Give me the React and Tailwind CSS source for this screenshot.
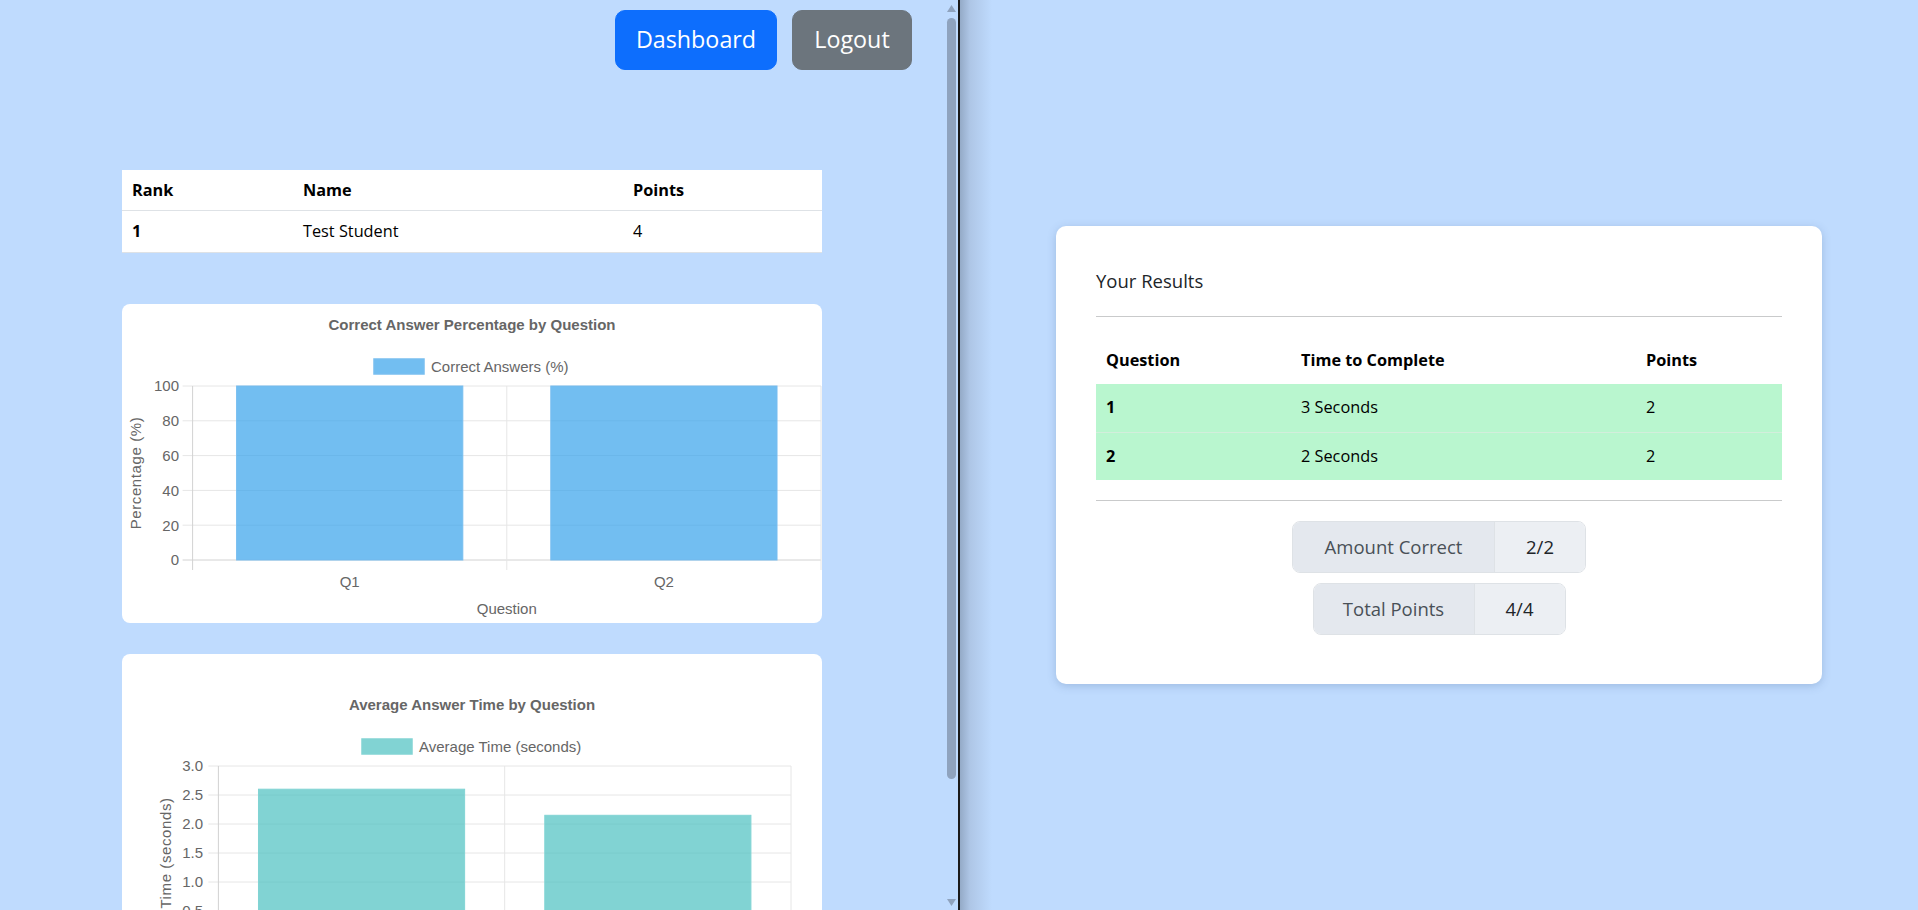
import React from 'react';

const leaderboard = [{ rank: 1, name: 'Test Student', points: 4 }];

const results = [
  { q: 1, time: '3 Seconds', points: 2 },
  { q: 2, time: '2 Seconds', points: 2 },
];

function BarChart({ width, height = 319, title, legend, fill, stroke, yTitle, ticks, max, values, labels, xTitle, plotLeft, labelRight, legendX }) {
  const plotTop = 82;
  const plotBottom = 256;
  const plotRight = width - 1;
  const cat = (plotRight - plotLeft) / values.length;
  const barW = cat * 0.72;
  const y = (v) => plotTop + (1 - v / max) * (plotBottom - plotTop);
  const font = "'Liberation Sans', Arial, sans-serif";

  return (
    <svg width={width} height={height} className="block" fontFamily={font}>
      <text x={width / 2} y={26} textAnchor="middle" fontSize="15" fontWeight="bold" fill="#666">{title}</text>
      <rect x={legendX} y={55} width={50} height={15} fill={fill} stroke={stroke} strokeWidth="1.5" />
      <text x={legendX + 57} y={67.5} fontSize="15" fill="#666">{legend}</text>

      {ticks.map((t) => (
        <g key={t}>
          <line x1={plotLeft - 10} x2={plotRight} y1={y(t)} y2={y(t)} stroke={t === 0 ? '#d2d2d2' : '#e6e6e6'} strokeWidth="1" />
          <text x={labelRight} y={y(t) + 5.4} textAnchor="end" fontSize="15" fill="#666">{max > 10 ? t : t === 0 ? '0' : t.toFixed(1)}</text>
        </g>
      ))}
      {Array.from({ length: values.length + 1 }).map((_, i) => (
        <line key={i} x1={plotLeft + i * cat} x2={plotLeft + i * cat} y1={plotTop} y2={plotBottom + 10} stroke={i === 0 ? '#d2d2d2' : '#e6e6e6'} strokeWidth="1" />
      ))}
      {values.map((v, i) => {
        const cx = plotLeft + cat * (i + 0.5);
        return (
          <g key={i}>
            <rect x={cx - barW / 2} y={y(v)} width={barW} height={plotBottom - y(v)} fill={fill} stroke={stroke} strokeWidth="1" />
            <text x={cx} y={283} textAnchor="middle" fontSize="15" fill="#666">{labels[i]}</text>
          </g>
        );
      })}
      <text x={(plotLeft + plotRight) / 2} y={310} textAnchor="middle" fontSize="15" fill="#666">{xTitle}</text>
      <text transform={`translate(13.5,${(plotTop + plotBottom) / 2}) rotate(-90)`} dy="5" textAnchor="middle" fontSize="15" fill="#666" letterSpacing="0.6">{yTitle}</text>
    </svg>
  );
}

function Triangle({ down }) {
  return (
    <svg width="9" height="7" viewBox="0 0 9 7" className="block">
      <path d={down ? 'M0 0h9L4.5 7z' : 'M4.5 0L9 7H0z'} fill="#8fa3be" />
    </svg>
  );
}

export default function App() {
  return (
    <div className="flex h-[910px] w-full overflow-hidden bg-[#bfdbfe] font-['Open_Sans',sans-serif] text-[#212529]">
      {/* left pane */}
      <div className="flex h-full w-[958px] shrink-0">
        <div className="h-full w-[944px] overflow-hidden">
          <div className="flex justify-end gap-[15px] pr-[32px] pt-[10px]">
            <button className="h-[60px] w-[162px] rounded-[10px] border border-[#0d6efd] bg-[#0d6efd] text-[23.3px] leading-[37.5px] text-white">
              Dashboard
            </button>
            <button className="h-[60px] w-[120px] rounded-[10px] border border-[#6c757d] bg-[#6c757d] text-[23.3px] leading-[37.5px] text-white">
              Logout
            </button>
          </div>

          <table className="mx-auto mt-[100px] w-[700px] border-collapse bg-white text-left text-[16.3px] leading-[26.25px] text-black">
            <thead>
              <tr className="border-b border-[#dee2e6]">
                <th className="w-[171px] px-[10px] py-[7px] font-bold">Rank</th>
                <th className="w-[330px] px-[10px] py-[7px] font-bold">Name</th>
                <th className="px-[10px] py-[7px] font-bold">Points</th>
              </tr>
            </thead>
            <tbody>
              {leaderboard.map((r) => (
                <tr key={r.rank} className="border-b border-[#dee2e6]">
                  <th className="px-[10px] py-[7px] font-bold">{r.rank}</th>
                  <td className="px-[10px] py-[7px]">{r.name}</td>
                  <td className="px-[10px] py-[7px]">{r.points}</td>
                </tr>
              ))}
            </tbody>
          </table>

          <div className="mx-auto mt-[51px] w-[700px] overflow-hidden rounded-[8px] bg-white">
            <BarChart
              width={700}
              title="Correct Answer Percentage by Question"
              legend="Correct Answers (%)"
              legendX={252}
              fill="rgba(54,162,235,0.7)"
              stroke="rgb(120,190,240)"
              yTitle="Percentage (%)"
              xTitle="Question"
              ticks={[100, 80, 60, 40, 20, 0]}
              max={100}
              values={[100, 100]}
              labels={['Q1', 'Q2']}
              plotLeft={70.6}
              labelRight={57}
            />
          </div>

          <div className="mx-auto mt-[31px] w-[700px] rounded-[8px] bg-white p-[30px]">
            <BarChart
              width={640}
              title="Average Answer Time by Question"
              legend="Average Time (seconds)"
              legendX={210}
              fill="rgba(75,192,192,0.7)"
              stroke="rgb(130,212,212)"
              yTitle="Time (seconds)"
              xTitle="Question"
              ticks={[3, 2.5, 2, 1.5, 1, 0.5, 0]}
              max={3}
              values={[2.6, 2.15]}
              labels={['Q1', 'Q2']}
              plotLeft={66.4}
              labelRight={51}
            />
          </div>
        </div>

        {/* scrollbar */}
        <div className="flex h-full w-[14px] flex-col items-center pb-[4px] pt-[5px]">
          <Triangle />
          <div className="mt-[6px] h-[761px] w-[9px] rounded-full bg-[#8fa3be]" />
          <div className="flex-1" />
          <Triangle down />
        </div>
      </div>

      {/* divider */}
      <div className="h-full w-[2px] shrink-0 bg-[#1a1a1a]" />

      {/* right pane */}
      <div className="flex h-full flex-1 items-center justify-center bg-[linear-gradient(to_right,#94aac7,#aec6e6_10px,#bfdbfe_32px)]">
        <div className="w-[766px] rounded-[10px] bg-white px-[40px] pb-[49px] pt-[40px] shadow-[0_2px_8px_rgba(60,90,140,0.25)]">
          <div className="text-[18.5px] leading-[30px] text-[#212529]">Your Results</div>
          <hr className="mt-[20px] border-0 border-t border-[#c9cacb]" />

          <table className="mt-[20px] w-full border-collapse text-left text-[16.3px] leading-[27.5px] text-black">
            <thead>
              <tr>
                <th className="w-[195px] px-[10px] py-[10px] font-bold">Question</th>
                <th className="w-[345px] px-[10px] py-[10px] font-bold">Time to Complete</th>
                <th className="px-[10px] py-[10px] font-bold">Points</th>
              </tr>
            </thead>
            <tbody>
              {results.map((r, i) => (
                <tr key={r.q} className={`bg-[#b9f6cf] ${i === 0 ? 'border-b border-[#d3eedc]' : ''}`}>
                  <th className="px-[10px] py-[10px] font-bold">{r.q}</th>
                  <td className="px-[10px] py-[10px]">{r.time}</td>
                  <td className="px-[10px] py-[10px]">{r.points}</td>
                </tr>
              ))}
            </tbody>
          </table>

          <hr className="mt-[20px] border-0 border-t border-[#c9cacb]" />

          <div className="mt-[20px] flex flex-col items-center gap-[10px]">
            {[
              ['Amount Correct', '2/2', 'w-[201px]', 'w-[91px]'],
              ['Total Points', '4/4', 'w-[160px]', 'w-[91px]'],
            ].map(([label, value, lw, vw]) => (
              <div key={label} className="flex h-[52px] overflow-hidden rounded-[8px] border border-[#dee2e6] text-[18.5px] leading-[30px]">
                <span className={`flex items-center justify-center bg-[#e4e8ee] text-[#495057] ${lw}`}>{label}</span>
                <span className={`flex items-center justify-center border-l border-[#dee2e6] bg-[#eceff3] text-[#212529] ${vw}`}>{value}</span>
              </div>
            ))}
          </div>
        </div>
      </div>
    </div>
  );
}
